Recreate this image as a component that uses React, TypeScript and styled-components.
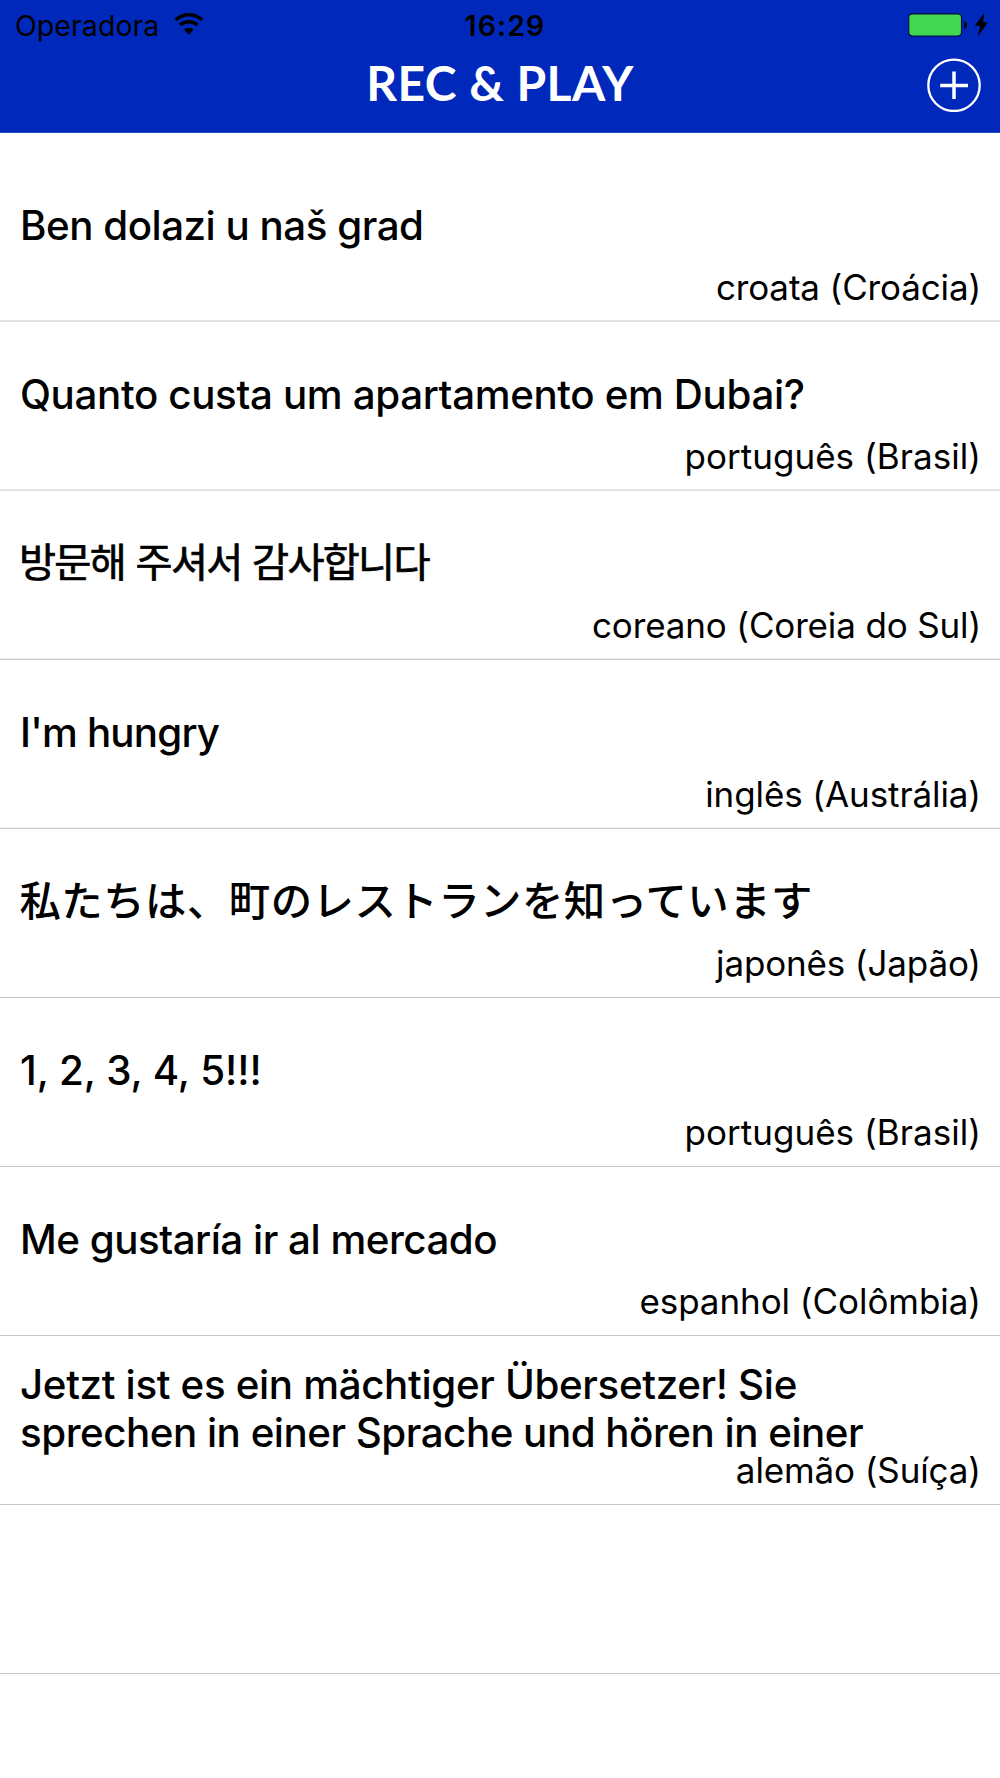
import React from 'react';
import styled, { createGlobalStyle } from 'styled-components';

const GlobalStyle = createGlobalStyle`
  *, *::before, *::after { box-sizing: border-box; }
  html, body { margin: 0; padding: 0; background: #fff; }
`;

const Screen = styled.div`
  width: 1000px;
  min-height: 1778px;
  display: flex;
  flex-direction: column;
  background: #fff;
  color: #000;
  font-family: Inter, 'Noto Sans CJK KR', 'Noto Sans CJK JP', sans-serif;
  overflow: hidden;
`;

const Header = styled.header`
  height: 133px;
  display: flex;
  flex-direction: column;
  background: #0029bc;
  border-bottom: 1px solid #2448c4;
`;

const StatusBar = styled.div`
  height: 50px;
  padding: 0 5px 0 15px;
  display: grid;
  grid-template-columns: 1fr auto 1fr;
  align-items: center;
  font-size: 28.5px;
  line-height: 44px;
`;

const Carrier = styled.div`
  display: flex;
  align-items: center;
  gap: 15px;
  letter-spacing: 0.06px;
`;

const StatusText = styled.span`
  padding-top: 1px;
`;

const Clock = styled.div`
  padding-top: 1px;
  font-weight: 600;
  letter-spacing: 1.1px;
`;

const Power = styled.div`
  display: flex;
  justify-content: flex-end;
  align-items: center;
  gap: 8px;
  padding-right: 7px;
`;

const WifiIcon = styled.svg`
  display: block;
  margin-bottom: 2px;
`;

const Icon = styled.svg`
  display: block;
`;

const NavBar = styled.div`
  flex: 1;
  padding: 0 19px 0 19px;
  display: grid;
  grid-template-columns: 54px 1fr 54px;
  align-items: start;
`;

const Title = styled.h1`
  grid-column: 2;
  margin: 0;
  padding-top: 1px;
  text-align: center;
  color: #fff;
  font-family: Lato, sans-serif;
  font-weight: 700;
  font-size: 48px;
  line-height: 64px;
  letter-spacing: 0.45px;
`;

const AddButton = styled.button`
  width: 54px;
  height: 54px;
  margin: 8px 0 0;
  padding: 0;
  border: 0;
  background: none;
`;

const List = styled.ul`
  margin: 20px 0 0;
  padding: 0;
  list-style: none;
`;

const Row = styled.li<{ $line: string; $soft: string }>`
  height: 169px;
  padding: 0 19px 0 20px;
  display: grid;
  grid-template: 100% / 100%;
  border-bottom: 1px solid ${(p) => p.$line};
  box-shadow: inset 0 -1px 0 ${(p) => p.$soft};
`;

const Phrase = styled.div`
  grid-area: 1 / 1;
  align-self: center;
  padding-bottom: 22px;
  font-weight: 500;
  font-size: 40.3px;
  line-height: 48px;

  &:lang(ko) {
    padding-bottom: 24px;
    margin-left: -1px;
    font-weight: 400;
    word-spacing: 1px;
    -webkit-text-stroke: 0.7px #000;
  }

  &:lang(ja) {
    padding-bottom: 24px;
    margin-left: -0.5px;
  }
`;

const Line = styled.div<{ $track: number; $size?: number }>`
  height: 48px;
  white-space: nowrap;
  font-size: ${(p) => p.$size ?? 40.3}px;
  letter-spacing: ${(p) => p.$track}px;
`;

const Language = styled.div<{ $track: number }>`
  grid-area: 1 / 1;
  align-self: end;
  justify-self: end;
  margin-bottom: 13px;
  font-size: 35px;
  line-height: 42px;
  white-space: nowrap;
  letter-spacing: ${(p) => p.$track}px;
`;

type Entry = {
  lines: { text: string; track: number; size?: number }[];
  lang: string;
  language: string;
  track: number;
  line?: string;
  soft?: string;
};

const entries: Entry[] = [
  {
    lines: [{ text: 'Ben dolazi u naš grad', track: -0.48 }],
    lang: 'hr', language: 'croata (Croácia)', track: -0.15, line: '#e2e2e2', soft: '#e4e4e4',
  },
  {
    lines: [{ text: 'Quanto custa um apartamento em Dubai?', track: -0.35 }],
    lang: 'pt', language: 'português (Brasil)', track: 0.04, line: '#dedede', soft: '#e6e6e6',
  },
  {
    lines: [{ text: '방문해 주셔서 감사합니다', track: -1.75 }],
    lang: 'ko', language: 'coreano (Coreia do Sul)', track: -0.15, line: '#d0d0d0', soft: '#ececec',
  },
  {
    lines: [{ text: "I'm hungry", track: -0.8 }],
    lang: 'en', language: 'inglês (Austrália)', track: -0.1, line: '#cccccc', soft: '#f2f2f2',
  },
  {
    lines: [{ text: '私たちは、町のレストランを知っています', track: 0.48, size: 41.4 }],
    lang: 'ja', language: 'japonês (Japão)', track: -0.15, soft: '#fafafa',
  },
  {
    lines: [{ text: '1, 2, 3, 4, 5!!!', track: -0.08 }],
    lang: 'pt', language: 'português (Brasil)', track: 0.04,
  },
  {
    lines: [{ text: 'Me gustaría ir al mercado', track: -0.48 }],
    lang: 'es', language: 'espanhol (Colômbia)', track: -0.06,
  },
  {
    lines: [
      { text: 'Jetzt ist es ein mächtiger Übersetzer! Sie', track: -0.33 },
      { text: 'sprechen in einer Sprache und hören in einer', track: -0.48 },
    ],
    lang: 'de', language: 'alemão (Suíça)', track: -0.12,
  },
];

export default function App() {
  return (
    <Screen>
      <GlobalStyle />
      <Header>
        <StatusBar>
          <Carrier>
            <StatusText>Operadora</StatusText>
            <WifiIcon width="30" height="22" viewBox="0 0 30 22" fill="none" stroke="#000" strokeWidth="3.4">
              <path d="M1.5 6.9A19.8 19.8 0 0 1 28.1 6.9" />
              <path d="M6.2 12.1A12.8 12.8 0 0 1 23.4 12.1" />
              <path d="M14.8 21.8L9.9 16.6A7.2 7.2 0 0 1 19.7 16.6Z" fill="#000" stroke="none" />
            </WifiIcon>
          </Carrier>
          <Clock>16:29</Clock>
          <Power>
            <Icon width="59" height="24" viewBox="0 0 59 24">
              <rect x="0.6" y="0.7" width="53" height="22.4" rx="4" fill="#43d854" stroke="#00114e" strokeWidth="1.4" />
              <path d="M56 8C60 9 60 15 56 16Z" fill="#00051a" />
            </Icon>
            <Icon width="13" height="24" viewBox="0 0 13 24">
              <path d="M9.2 0L0 12.6L5.2 13.1L2.7 23.4L12.8 9.6L8 9.1Z" fill="#000" />
            </Icon>
          </Power>
        </StatusBar>
        <NavBar>
          <Title>REC &amp; PLAY</Title>
          <AddButton aria-label="Adicionar">
            <Icon width="54" height="54" viewBox="0 0 54 54" fill="none" stroke="#fff">
              <circle cx="27" cy="27.3" r="25.7" strokeWidth="2.3" />
              <path d="M13.2 27.5H41M27 13.6V41" strokeWidth="3.5" />
            </Icon>
          </AddButton>
        </NavBar>
      </Header>
      <List>
        {entries.map((e, i) => (
          <Row key={i} $line={e.line ?? '#c8c8ca'} $soft={e.soft ?? '#ffffff'}>
            <Phrase lang={e.lang}>
              {e.lines.map((l) => (
                <Line key={l.text} $track={l.track} $size={l.size}>{l.text}</Line>
              ))}
            </Phrase>
            <Language $track={e.track}>{e.language}</Language>
          </Row>
        ))}
        <Row $line="#c8c8ca" $soft="#ffffff" />
      </List>
    </Screen>
  );
}
